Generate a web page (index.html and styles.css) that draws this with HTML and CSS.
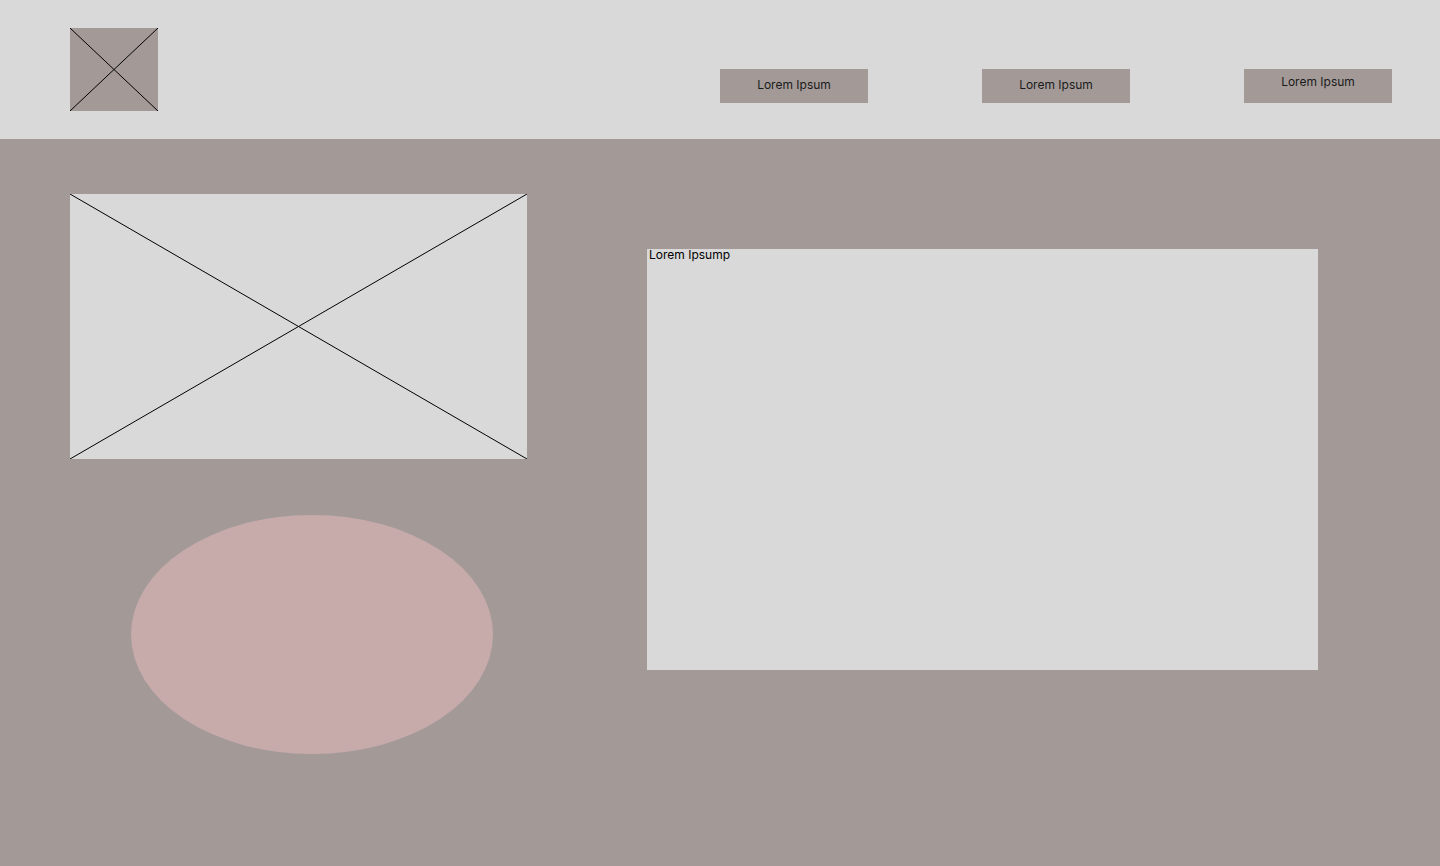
FILE: index.html
```html
<!DOCTYPE html>
<html lang="en">
<head>
    <meta charset="UTF-8">
    <meta name="viewport" content="width=device-width, initial-scale=1.0">
    <title>Wireframe</title>
    <link rel="stylesheet" href="styles.css">
</head>
<body>
    <header class="topbar">
        <div class="logo">
            <svg viewBox="0 0 88 83" preserveAspectRatio="none">
                <line x1="0" y1="0" x2="88" y2="83"/>
                <line x1="88" y1="0" x2="0" y2="83"/>
            </svg>
        </div>

        <nav class="nav">
            <a class="nav-btn">Lorem Ipsum</a>
            <a class="nav-btn">Lorem Ipsum</a>
            <a class="nav-btn nav-btn-high">Lorem Ipsum</a>
        </nav>
    </header>

    <main class="content">
        <div class="left-col">
            <div class="picture">
                <svg viewBox="0 0 457 265" preserveAspectRatio="none">
                    <line x1="0" y1="0" x2="457" y2="265"/>
                    <line x1="457" y1="0" x2="0" y2="265"/>
                </svg>
            </div>
            <div class="blob"></div>
        </div>

        <section class="panel">
            <p>Lorem Ipsump</p>
        </section>
    </main>
</body>
</html>
```

FILE: styles.css
```css
/* wireframe */
body {
    margin: 0;
    font-family: Inter, "Noto Sans", sans-serif;
    font-size: 12px;
    color: #000;
    background: #a39a98;
}

.topbar {
    display: flex;
    justify-content: space-between;
    height: 139px;
    box-sizing: border-box;
    padding: 28px 48px 0 70px;
    background: #d9d9d9;
}

.logo {
    width: 88px;
    height: 83px;
    background: #a39a98;
}

.logo svg,
.picture svg {
    display: block;
    width: 100%;
    height: 100%;
}

.logo line,
.picture line {
    stroke: #000;
    stroke-width: 1;
}

.nav {
    display: flex;
    align-items: flex-start;
    gap: 114px;
    padding-top: 41px;
}

.nav-btn {
    width: 148px;
    height: 34px;
    line-height: 32px;
    text-align: center;
    background: #a39a98;
    color: #1a1a1a;
}

.nav-btn-high {
    line-height: 26px;
}

.content {
    display: flex;
    align-items: flex-start;
    gap: 120px;
    min-height: 727px;
    padding-left: 70px;
}

.left-col {
    display: flex;
    flex-direction: column;
    padding-top: 55px;
}

.picture {
    width: 457px;
    height: 265px;
    background: #d9d9d9;
}

.blob {
    width: 362px;
    height: 239px;
    margin: 56px 0 0 61px;
    border-radius: 50%;
    background: #c7aaaa;
}

.panel {
    width: 671px;
    height: 421px;
    margin-top: 110px;
    padding: 0 2px;
    box-sizing: border-box;
    background: #d9d9d9;
}

.panel p {
    margin: 0;
    line-height: 12px;
}
```
